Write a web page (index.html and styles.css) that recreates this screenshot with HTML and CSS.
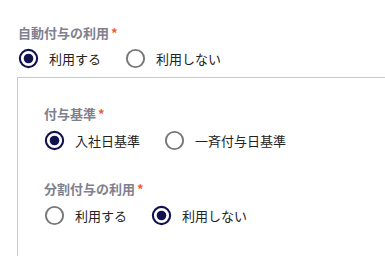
FILE: index.html
```html
<!DOCTYPE html>
<html lang="ja">
<head>
<meta charset="utf-8">
<link rel="stylesheet" href="styles.css">
</head>
<body>
<div class="page">
  <div class="field">
    <div class="field-label">自動付与の利用<span class="req">*</span></div>
    <div class="radio-group">
      <label class="radio checked">
        <svg class="radio-icon" viewBox="0 0 24 24"><circle cx="12" cy="12" r="9" class="ring"/><circle cx="12" cy="12" r="5" class="dot"/></svg>
        <span class="radio-text">利用する</span>
      </label>
      <label class="radio">
        <svg class="radio-icon" viewBox="0 0 24 24"><circle cx="12" cy="12" r="9" class="ring"/></svg>
        <span class="radio-text">利用しない</span>
      </label>
    </div>
  </div>
  <div class="panel">
    <div class="field">
      <div class="field-label">付与基準<span class="req">*</span></div>
      <div class="radio-group">
        <label class="radio checked">
          <svg class="radio-icon" viewBox="0 0 24 24"><circle cx="12" cy="12" r="9" class="ring"/><circle cx="12" cy="12" r="5" class="dot"/></svg>
          <span class="radio-text">入社日基準</span>
        </label>
        <label class="radio">
          <svg class="radio-icon" viewBox="0 0 24 24"><circle cx="12" cy="12" r="9" class="ring"/></svg>
          <span class="radio-text">一斉付与日基準</span>
        </label>
      </div>
    </div>
    <div class="field field-spaced">
      <div class="field-label">分割付与の利用<span class="req">*</span></div>
      <div class="radio-group">
        <label class="radio">
          <svg class="radio-icon" viewBox="0 0 24 24"><circle cx="12" cy="12" r="9" class="ring"/></svg>
          <span class="radio-text">利用する</span>
        </label>
        <label class="radio checked">
          <svg class="radio-icon" viewBox="0 0 24 24"><circle cx="12" cy="12" r="9" class="ring"/><circle cx="12" cy="12" r="5" class="dot"/></svg>
          <span class="radio-text">利用しない</span>
        </label>
      </div>
    </div>
  </div>
</div>
</body>
</html>
```
FILE: styles.css
```css
html, body {
  margin: 0;
  padding: 0;
  background: #ffffff;
  overflow: hidden;
}
body {
  font-family: "Noto Sans CJK JP", "Noto Sans", sans-serif;
  color: #222222;
  width: 385px;
  height: 256px;
}
.page {
  height: 256px;
  box-sizing: border-box;
  padding: 24px 0 0 17px;
  display: flex;
  flex-direction: column;
}
.field-label {
  font-size: 13px;
  line-height: 18px;
  font-weight: 700;
  color: #7f7f8e;
  padding-left: 1px;
}
.req {
  color: #f05a3c;
  margin-left: 2px;
}
.radio-group {
  display: flex;
  align-items: center;
  margin-top: 5px;
}
.radio {
  display: flex;
  align-items: center;
  margin-right: 23px;
}
.radio-icon {
  width: 23px;
  height: 23px;
  display: block;
}
.ring {
  fill: none;
  stroke: #777777;
  stroke-width: 2;
}
.checked .ring {
  stroke: #12124f;
  stroke-width: 2.2;
}
.dot {
  fill: #12124f;
}
.radio-text {
  font-size: 13px;
  line-height: 18px;
  margin-left: 9px;
}
.panel {
  flex: 1;
  margin-top: 7px;
  border-top: 1px solid #c9c9c9;
  border-left: 1px solid #c9c9c9;
  padding: 27px 0 0 25px;
}
.panel .radio-group {
  margin-top: 6px;
}
.field-spaced {
  margin-top: 28px;
}
```
